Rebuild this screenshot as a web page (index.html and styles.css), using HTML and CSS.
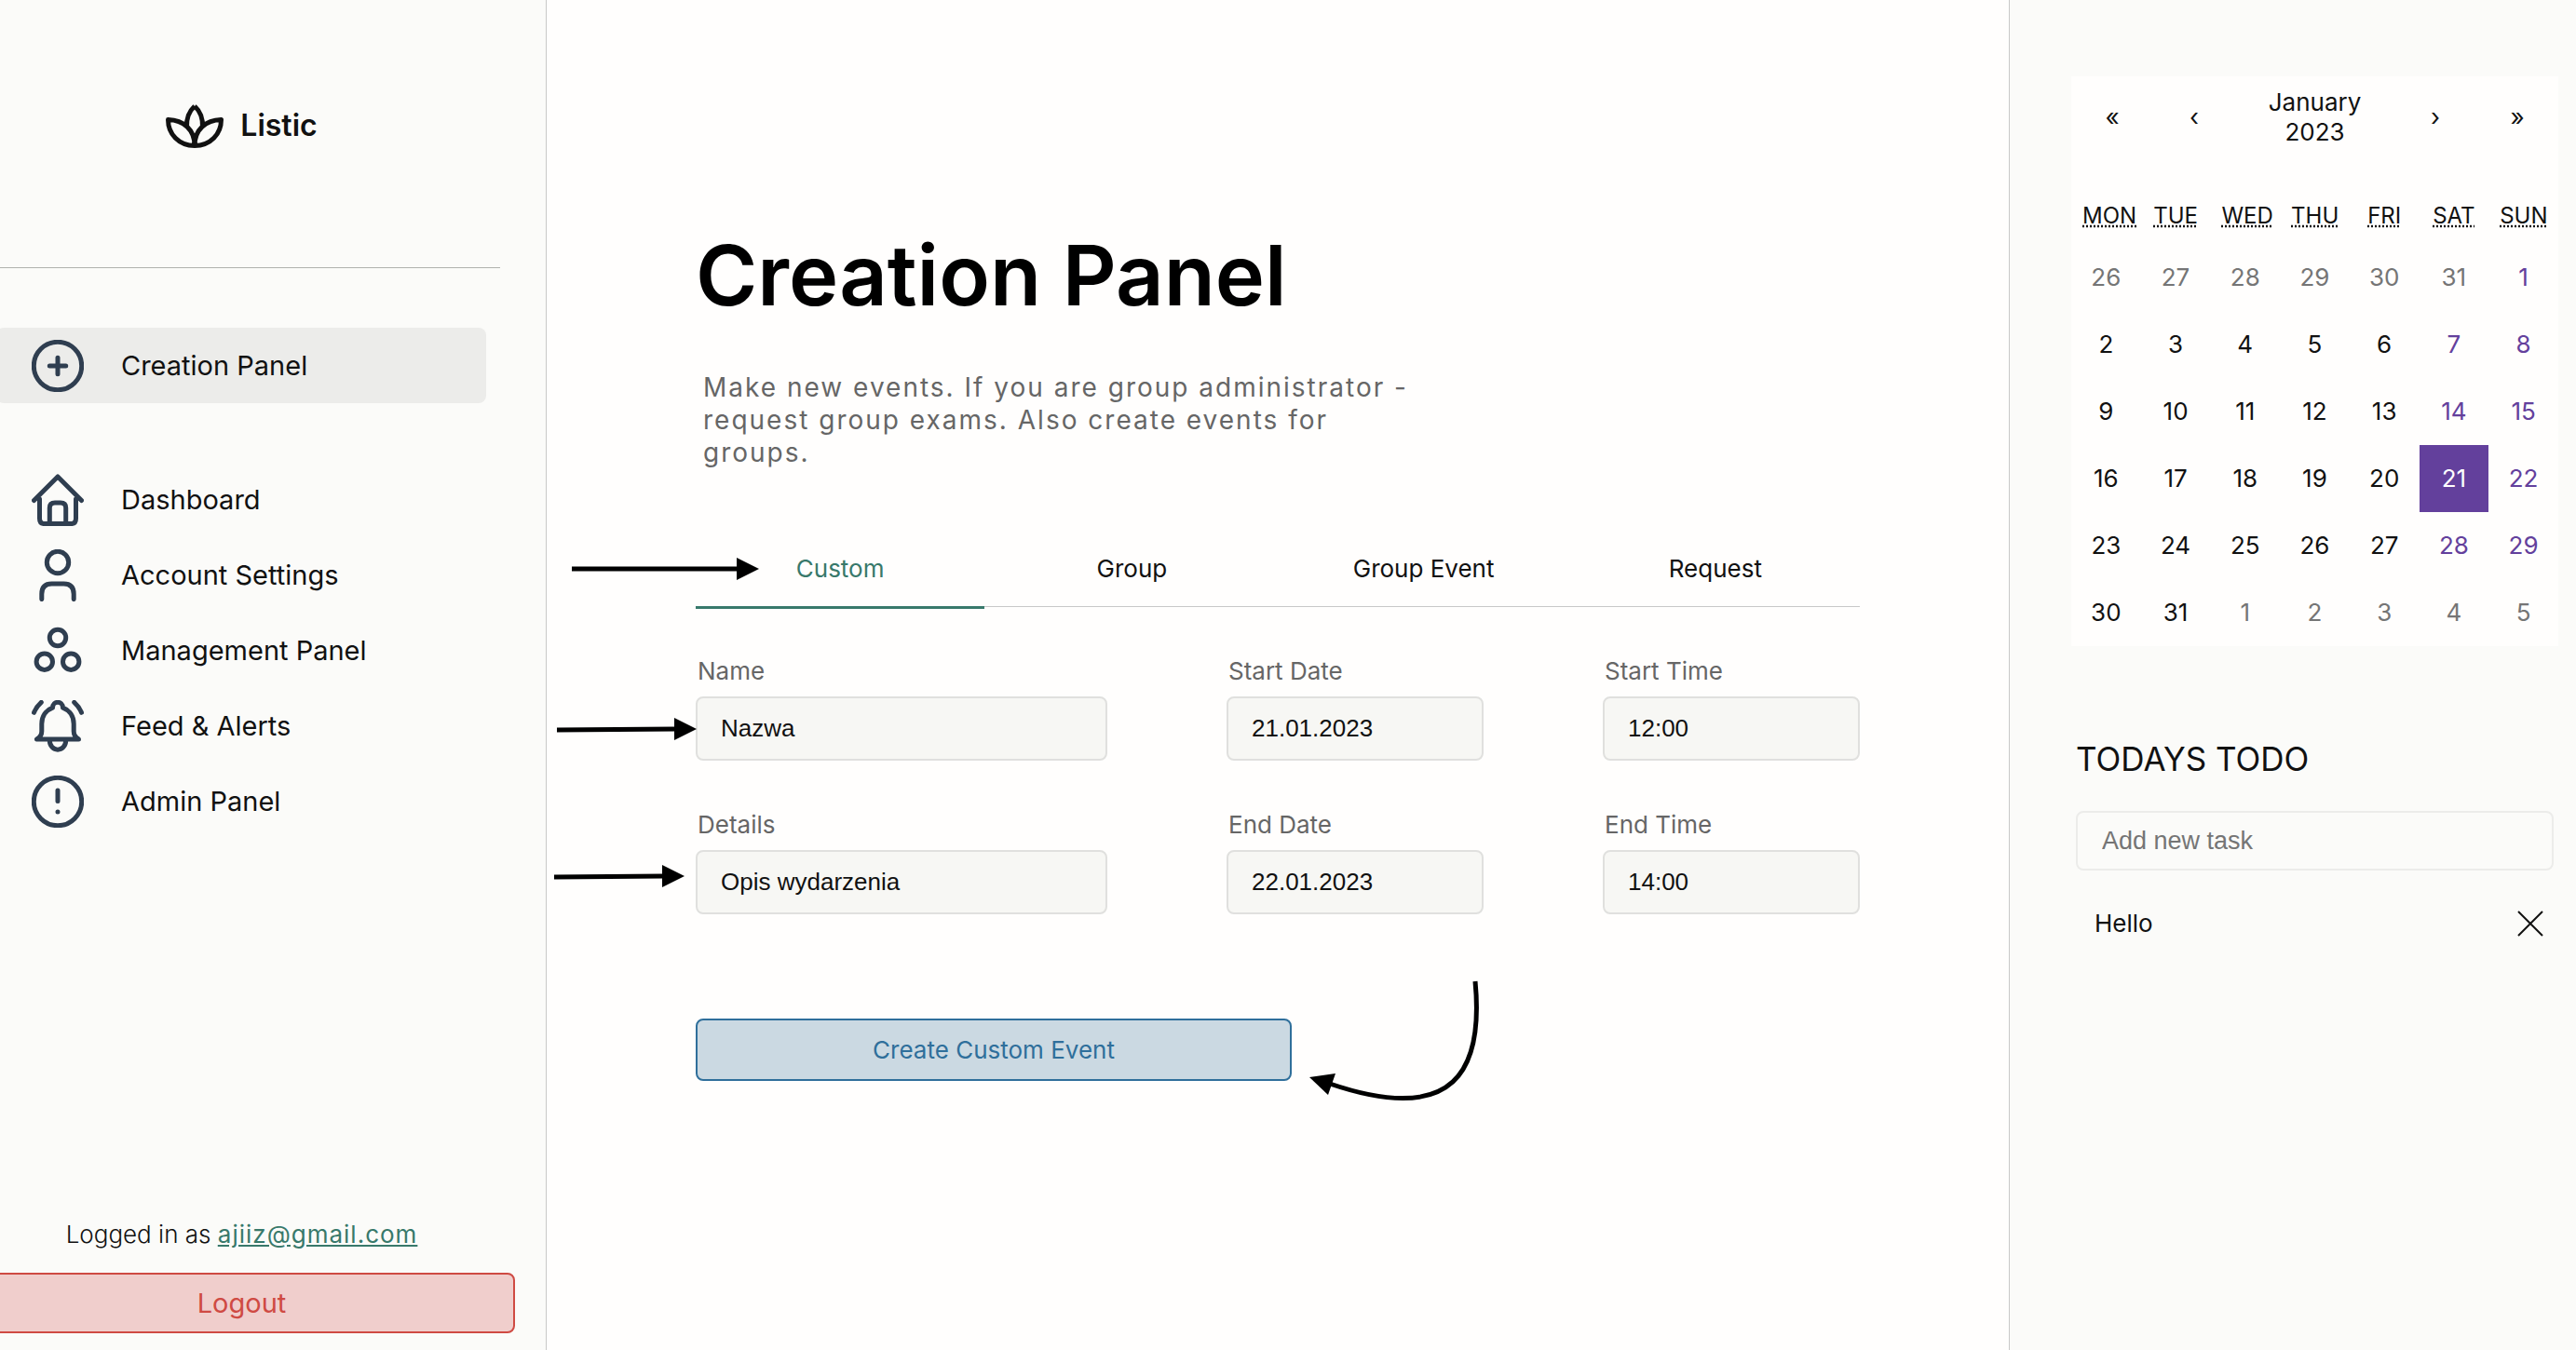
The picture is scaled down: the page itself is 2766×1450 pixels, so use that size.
FILE: index.html
```html
<!DOCTYPE html>
<html lang="en">
<head>
<meta charset="utf-8">
<title>Listic – Creation Panel</title>
<link rel="stylesheet" href="styles.css">
</head>
<body>
<div class="app">
  <aside class="sidebar">
    <div class="sidebar-inner">
      <div class="brand">
        <svg class="brand-icon" viewBox="0 0 62 48" aria-hidden="true"><path d="M31 3C25 8.500 22 17 22.500 26M31 3C37 8.500 40 17 39.500 26M2.500 17.500C2.500 33 14 45.500 31 45.500S59.500 33 59.500 17.500C43 18 31 28 31 45.500C31 28 19 18 2.500 17.500Z"/></svg>
        <span>Listic</span>
      </div>
      <hr class="divider">
      <nav class="nav">
        <a class="nav-item nav-item-active" href="#"><svg class="icon" viewBox="0 0 56 56" aria-hidden="true"><circle cx="28" cy="28" r="25.700"/><path d="M28 19.300V36.700M19.300 28H36.700"/></svg>Creation Panel</a>
        <a class="nav-item" href="#"><svg class="icon" viewBox="0 0 56 56" aria-hidden="true"><path d="M2.500 28.500L28 3L53.500 28.500M8.500 27V48Q8.500 53.600 14 53.600H42Q47.500 53.600 47.500 48V27M19.300 53V36.500Q19.300 31 25 31H31Q36.700 31 36.700 36.500V53"/></svg>Dashboard</a>
        <a class="nav-item" href="#"><svg class="icon" viewBox="0 0 56 56" aria-hidden="true"><circle cx="28" cy="14" r="11.700"/><path d="M10.800 53.600V48Q10.800 37 21.500 37H34.500Q45.200 37 45.200 48V53.600"/></svg>Account Settings</a>
        <a class="nav-item" href="#"><svg class="icon" viewBox="0 0 56 56" aria-hidden="true"><circle cx="28" cy="14" r="8.700"/><circle cx="13.800" cy="39.700" r="8.700"/><circle cx="42.200" cy="39.700" r="8.700"/></svg>Management Panel</a>
        <a class="nav-item" href="#"><svg class="icon" viewBox="0 0 56 56" aria-hidden="true"><path d="M2.500 13.300Q5 7 10.300 2.300M53.500 13.300Q51 7 45.700 2.300M5.500 42H50.500Q45.200 39 45.200 33.500V25.500C45.200 17.500 41 11 33.500 8.200C33.500 0.300 22.500 0.300 22.500 8.200C15 11 10.800 17.500 10.800 25.500V33.500Q10.800 39 5.500 42M19.300 43C19.300 56.500 36.700 56.500 36.700 43"/></svg>Feed &amp; Alerts</a>
        <a class="nav-item" href="#"><svg class="icon" viewBox="0 0 56 56" aria-hidden="true"><circle cx="28" cy="28" r="25.700"/><path d="M28 16V27.500M28 38.900V39"/></svg>Admin Panel</a>
      </nav>
      <div class="account">
        <p class="account-text">Logged in as <a class="account-link" href="#">ajiiz@gmail.com</a></p>
        <button class="logout" type="button">Logout</button>
      </div>
    </div>
  </aside>

  <main class="main">
    <h1 class="title">Creation Panel</h1>
    <p class="intro">Make new events. If you are group administrator - request group exams. Also create events for groups.</p>

    <div class="tabs" role="tablist">
      <button class="tab tab-active" type="button" role="tab" aria-selected="true">Custom</button>
      <button class="tab" type="button" role="tab">Group</button>
      <button class="tab" type="button" role="tab">Group Event</button>
      <button class="tab" type="button" role="tab">Request</button>
      <svg class="arrow arrow-tab" viewBox="0 0 201 24" aria-hidden="true"><path class="arrow-line" d="M0 12H180"/><path d="M177 0L201 12L177 24Z"/></svg>
    </div>

    <form class="form">
      <div class="fields">
        <div class="field">
          <label for="name">Name</label>
          <input id="name" type="text" value="Nazwa">
          <svg class="arrow arrow-name" viewBox="0 0 150 24" aria-hidden="true"><path class="arrow-line" d="M0 13L128 12"/><path d="M126 0L150 12L126 24Z"/></svg>
        </div>
        <div class="field">
          <label for="start-date">Start Date</label>
          <input id="start-date" type="text" value="21.01.2023">
        </div>
        <div class="field">
          <label for="start-time">Start Time</label>
          <input id="start-time" type="text" value="12:00">
        </div>
        <div class="field">
          <label for="details">Details</label>
          <input id="details" type="text" value="Opis wydarzenia">
          <svg class="arrow arrow-details" viewBox="0 0 140 24" aria-hidden="true"><path class="arrow-line" d="M0 13L118 12"/><path d="M116 0L140 12L116 24Z"/></svg>
        </div>
        <div class="field">
          <label for="end-date">End Date</label>
          <input id="end-date" type="text" value="22.01.2023">
        </div>
        <div class="field">
          <label for="end-time">End Time</label>
          <input id="end-time" type="text" value="14:00">
        </div>
      </div>
      <div class="actions">
        <button class="create" type="button">Create Custom Event</button>
        <svg class="arrow arrow-create" viewBox="0 0 184 132" aria-hidden="true"><path class="arrow-line" d="M178 0C187 95 157 156 22 110"/><path d="M0 103L28 99L20 122Z"/></svg>
      </div>
    </form>
  </main>

  <aside class="aside">
    <section class="calendar">
      <div class="calendar-nav">
        <button type="button" aria-label="Previous year">«</button>
        <button type="button" aria-label="Previous month">‹</button>
        <button class="calendar-label" type="button">January 2023</button>
        <button type="button" aria-label="Next month">›</button>
        <button type="button" aria-label="Next year">»</button>
      </div>
      <table class="month">
        <thead>
          <tr><th><abbr title="Monday">Mon</abbr></th><th><abbr title="Tuesday">Tue</abbr></th><th><abbr title="Wednesday">Wed</abbr></th><th><abbr title="Thursday">Thu</abbr></th><th><abbr title="Friday">Fri</abbr></th><th><abbr title="Saturday">Sat</abbr></th><th><abbr title="Sunday">Sun</abbr></th></tr>
        </thead>
        <tbody>
          <tr><td class="other">26</td><td class="other">27</td><td class="other">28</td><td class="other">29</td><td class="other">30</td><td class="other">31</td><td class="weekend">1</td></tr>
          <tr><td>2</td><td>3</td><td>4</td><td>5</td><td>6</td><td class="weekend">7</td><td class="weekend">8</td></tr>
          <tr><td>9</td><td>10</td><td>11</td><td>12</td><td>13</td><td class="weekend">14</td><td class="weekend">15</td></tr>
          <tr><td>16</td><td>17</td><td>18</td><td>19</td><td>20</td><td class="selected">21</td><td class="weekend">22</td></tr>
          <tr><td>23</td><td>24</td><td>25</td><td>26</td><td>27</td><td class="weekend">28</td><td class="weekend">29</td></tr>
          <tr><td>30</td><td>31</td><td class="other">1</td><td class="other">2</td><td class="other">3</td><td class="other">4</td><td class="other">5</td></tr>
        </tbody>
      </table>
    </section>
    <section class="todo">
      <h2 class="todo-title">TODAYS TODO</h2>
      <input class="todo-input" type="text" placeholder="Add new task" aria-label="Add new task">
      <ul class="todo-list">
        <li class="todo-item">
          <span>Hello</span>
          <button class="todo-remove" type="button" aria-label="Remove Hello"><svg viewBox="0 0 28 28" aria-hidden="true"><path d="M1 1L27 27M27 1L1 27"/></svg></button>
        </li>
      </ul>
    </section>
  </aside>
</div>
</body>
</html>
```
FILE: styles.css
```css
* {
  box-sizing: border-box;
}

body {
  margin: 0;
  background: #fffefd;
  color: #111;
  font: 400 26px/32px Inter, "Liberation Sans", sans-serif;
}

h1, h2, p, ul {
  margin: 0;
  padding: 0;
}

button {
  padding: 0;
  border: 0;
  background: none;
  color: inherit;
  font: inherit;
  cursor: pointer;
}

.app {
  display: grid;
  grid-template-columns: 587fr 1570fr 609fr;
  min-height: 100vh;
}

/* Left sidebar */
.sidebar {
  display: flex;
  overflow: hidden;
  border-right: 1px solid #c8c8c8;
  background: #fbfbf9;
}

.sidebar-inner {
  display: flex;
  flex: 1;
  flex-direction: column;
  margin: 0 33px 0 -34px;
}

.brand {
  display: flex;
  align-items: center;
  justify-content: center;
  gap: 18px;
  padding-top: 111px;
  font-size: 32px;
  font-weight: 600;
  line-height: 48px;
}

.brand-icon {
  width: 62px;
  height: 48px;
  fill: none;
  stroke: #111;
  stroke-width: 5;
  stroke-linejoin: round;
}

.divider {
  margin: 128px 16px 0 0;
  border: 0;
  border-top: 1px solid #b0b2ae;
}

.nav {
  display: flex;
  flex-direction: column;
  margin: 64px 31px 0 30px;
}

.nav-item {
  display: flex;
  align-items: center;
  gap: 40px;
  height: 81px;
  padding-left: 38px;
  border-radius: 8px;
  color: #111;
  font-size: 29px;
  text-decoration: none;
}

.nav-item-active {
  margin-bottom: 63px;
  background: #ececea;
}

.icon {
  width: 56px;
  height: 56px;
  fill: none;
  stroke: #2f3e50;
  stroke-width: 5;
  stroke-linecap: round;
  stroke-linejoin: round;
}

.account {
  display: flex;
  flex-direction: column;
  gap: 25px;
  margin-top: auto;
  padding-bottom: 18px;
  text-align: center;
}

.account-text {
  font-weight: 300;
}

.account-link {
  color: #38796b;
  font-weight: 400;
  letter-spacing: 1px;
}

.logout {
  height: 65px;
  border: 2px solid #cf4a43;
  border-radius: 8px;
  background: #f0cecc;
  color: #cf4a43;
  font-size: 29px;
}

/* Creation form */
.main {
  padding: 242px 160px 0;
}

.title {
  color: #000;
  font-size: 90px;
  font-weight: 600;
  line-height: 108px;
}

.intro {
  max-width: 800px;
  margin-top: 49px;
  padding-left: 8px;
  color: #666;
  font-size: 28px;
  line-height: 35px;
  letter-spacing: 2px;
}

.tabs {
  position: relative;
  display: grid;
  grid-template-columns: repeat(4, 1fr);
  gap: 3px;
  margin-top: 66px;
  border-bottom: 1px solid #c8c8c8;
}

.tab {
  height: 84px;
  margin-bottom: -3px;
  border-bottom: 3px solid transparent;
}

.tab-active {
  border-color: #38796b;
  color: #38796b;
}

.fields {
  display: grid;
  grid-template-columns: 442fr 276fr 276fr;
  gap: 53px 128px;
  margin-top: 53px;
}

.field {
  position: relative;
  display: flex;
  flex-direction: column;
  gap: 11px;
}

.field label {
  padding-left: 2px;
  color: #666;
}

.field input {
  width: 100%;
  height: 69px;
  padding: 0 25px;
  border: 2px solid #e0e0de;
  border-radius: 8px;
  background: #f7f7f4;
  color: #111;
  font: 26px "Liberation Sans", Arial, sans-serif;
}

.actions {
  position: relative;
  width: 640px;
  margin-top: 112px;
}

.create {
  width: 100%;
  height: 67px;
  border: 2px solid #2f6f9b;
  border-radius: 8px;
  background: #cbd9e2;
  color: #2f6f9b;
}

/* Hand-placed guide arrows over the form */
.arrow {
  position: absolute;
  height: 24px;
  overflow: visible;
}

.arrow-line {
  fill: none;
  stroke: #000;
  stroke-width: 5;
}

.arrow-tab {
  top: 29px;
  left: -133px;
  width: 201px;
}

.arrow-name {
  top: 66px;
  left: -149px;
  width: 150px;
}

.arrow-details {
  top: 59px;
  left: -152px;
  width: 140px;
}

.arrow-create {
  top: -40px;
  left: 659px;
  width: 184px;
  height: 132px;
}

/* Right column */
.aside {
  padding: 82px 19px 0 66px;
  border-left: 1px solid #c8c8c8;
  background: #fbfbf9;
}

.calendar {
  background: #fffefd;
}

.calendar-nav {
  display: grid;
  grid-template-columns: 88px 88px 1fr 88px 88px;
  height: 88px;
  margin-bottom: 32px;
}

.calendar-label {
  padding: 0 20px;
}

.month {
  width: 100%;
  border-collapse: collapse;
  table-layout: fixed;
  text-align: center;
}

.month th {
  height: 60px;
  padding: 0 12px;
  font-size: 24px;
  font-weight: 400;
  text-transform: uppercase;
}

.month abbr {
  text-decoration: underline dotted;
}

.month td {
  height: 72px;
  padding: 0;
}

.month .other {
  color: #757575;
}

.month .weekend {
  color: #63409c;
}

.month .selected {
  background: #63409c;
  color: #fff;
}

.todo {
  margin-top: 99px;
  padding: 0 5px;
}

.todo-title {
  font-size: 35px;
  font-weight: 400;
  line-height: 44px;
}

.todo-input {
  width: 100%;
  height: 64px;
  margin-top: 34px;
  padding: 0 26px;
  border: 2px solid #ececea;
  border-radius: 8px;
  background: transparent;
  font: 27px "Liberation Sans", Arial, sans-serif;
}

.todo-input::placeholder {
  color: #757575;
}

.todo-list {
  margin-top: 41px;
  list-style: none;
}

.todo-item {
  display: flex;
  align-items: center;
  justify-content: space-between;
  padding: 0 11px 0 20px;
}

.todo-remove {
  display: flex;
}

.todo-remove svg {
  width: 28px;
  height: 28px;
  stroke: #111;
  stroke-width: 2;
}
```
